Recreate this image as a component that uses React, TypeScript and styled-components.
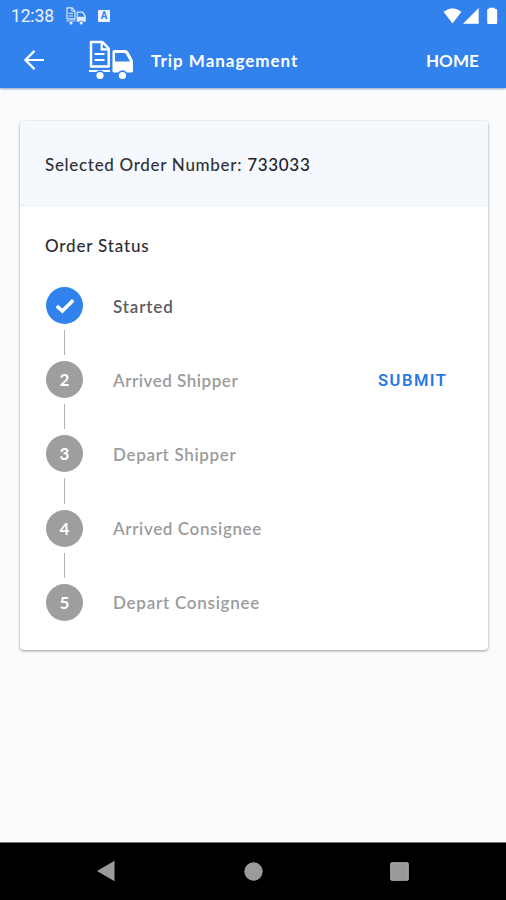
import React from "react";
import styled, { createGlobalStyle } from "styled-components";

const GlobalStyle = createGlobalStyle`
  * { box-sizing: border-box; }
  body { margin: 0; background: #f9fbfd; }
`;

const Screen = styled.div`
  width: 506px;
  height: 900px;
  display: flex;
  flex-direction: column;
  background: #f9fbfd;
  font-family: Lato, "Open Sans", sans-serif;
  overflow: hidden;
`;

const Header = styled.header`
  height: 88px;
  flex: none;
  background: #3182ed;
  color: #fff;
  box-shadow: 0 1px 2px rgba(40, 70, 130, 0.5);
`;

const StatusBar = styled.div`
  height: 32px;
  display: flex;
  align-items: center;
  padding: 0 8px 0 11px;
`;

const Clock = styled.span`
  width: 55px;
  font: 400 17.5px/32px Roboto, sans-serif;
  letter-spacing: -0.15px;
  opacity: 0.9;
`;

const Badge = styled.span`
  width: 12px;
  height: 12px;
  margin-left: 12px;
  border-radius: 1px;
  background: #eef4fd;
  color: #3182ed;
  font: 700 10px/12px Roboto, sans-serif;
  text-align: center;
`;

const SignalIcons = styled.svg`
  margin-left: auto;
`;

const AppBar = styled.div`
  height: 56px;
  display: flex;
  align-items: center;
  padding: 0 27px 0 23px;
`;

const BackIcon = styled.svg`
  margin-right: 44px;
`;

const Title = styled.h1`
  margin: 0 auto 0 18px;
  font-size: 17px;
  font-weight: 700;
  letter-spacing: 0.98px;
  white-space: nowrap;
`;

const HomeLink = styled.button`
  padding: 0;
  border: 0;
  background: none;
  color: #fff;
  font: 700 17px Lato, sans-serif;
  letter-spacing: 0.1px;
`;

const Main = styled.main`
  flex: 1;
  padding: 33px 18.5px 0 20px;
`;

const Card = styled.section`
  height: 529px;
  border-radius: 4px;
  background: #fff;
  box-shadow: 0 1px 3px rgba(0, 0, 0, 0.38), 0 0 1px rgba(0, 0, 0, 0.12);
  overflow: hidden;
`;

const CardHeader = styled.div`
  height: 85px;
  padding: 3px 0 0 25px;
  display: flex;
  align-items: center;
  background: #f5f9fe;
  border-bottom: 1px solid #e9eef4;
  color: #303236;
  font-size: 17px;
  font-weight: 500;
  letter-spacing: 0.69px;
  white-space: pre;
`;

const OrderNumber = styled.span`
  color: #202226;
`;

const SectionTitle = styled.h2`
  margin: 0;
  padding: 27px 0 0 25px;
  font-size: 17px;
  line-height: 26px;
  font-weight: 500;
  letter-spacing: 0.83px;
  color: #2e2e2e;
`;

const Steps = styled.ol`
  margin: 0;
  padding: 28px 40px 0 26px;
  list-style: none;
`;

const Step = styled.li`
  height: 37px;
  display: flex;
  align-items: center;
`;

const Connector = styled.li`
  width: 1.5px;
  height: 25.2px;
  margin: 6px 0 6px 17.5px;
  background: #b3b3b3;
`;

const Marker = styled.span<{ $done?: boolean }>`
  width: 37px;
  height: 37px;
  flex: none;
  border-radius: 50%;
  display: flex;
  align-items: center;
  justify-content: center;
  background: ${(p) => (p.$done ? "#3182ed" : "#9e9e9e")};
  color: #fff;
  font-size: 17px;
  font-weight: 700;
`;

const StepLabel = styled.span<{ $done?: boolean; $spacing: number }>`
  margin: 1px 0 0 30px;
  font-size: 17px;
  font-weight: 600;
  letter-spacing: ${(p) => p.$spacing}px;
  color: ${(p) => (p.$done ? "#5c5c5c" : "#9c9c9c")};
`;

const SubmitButton = styled.button`
  margin: 2px 0 0 auto;
  padding: 0;
  border: 0;
  background: none;
  color: #2878e4;
  font: 600 16.5px Roboto, sans-serif;
  letter-spacing: 1.5px;
`;

const NavBar = styled.nav`
  height: 58px;
  flex: none;
  border-top: 1px solid #777;
  background: #000;
  display: flex;
  align-items: center;
  justify-content: space-between;
  padding: 0 97px 1px 96px;
`;

const HomeKey = styled.svg`
  margin-left: 2px;
`;

function TruckIcon({ width, height, faded }: { width: number; height: number; faded?: boolean }) {
  return (
    <svg width={width} height={height} viewBox="0 0 44 40" fill="none" stroke="#fff" opacity={faded ? 0.85 : 1}>
      <path d="M2 2H13.5L19.7 8.5V26.5H2Z" strokeWidth="2.5" strokeLinejoin="round" />
      <path d="M12.7 2V9.3H19.5" strokeWidth="2.2" />
      <path d="M5.5 14H15.5M5.5 20H15.5" strokeWidth="2.2" />
      <path d="M0 31H21" strokeWidth="2" />
      <path
        d="M25 10H36.5Q38 10 39 11.5L43 18.5Q44 20 44 22V31Q44 32.5 42.5 32.5H25Q23.5 32.5 23.5 31V11.5Q23.5 10 25 10ZM26 13V21.5H41L37 14Q36.5 13 35.5 13Z"
        fill="#fff"
        fillRule="evenodd"
        stroke="none"
      />
      <circle cx="11" cy="35.5" r="4.4" fill="#fff" stroke="#3182ed" strokeWidth="1.6" />
      <circle cx="33.5" cy="35.5" r="4.4" fill="#fff" stroke="#3182ed" strokeWidth="1.6" />
    </svg>
  );
}

const steps = [
  { label: "Started", spacing: 0.85, done: true },
  { label: "Arrived Shipper", spacing: 0.53 },
  { label: "Depart Shipper", spacing: 0.67 },
  { label: "Arrived Consignee", spacing: 0.62 },
  { label: "Depart Consignee", spacing: 0.74 },
].map((step, i) => ({ ...step, action: i === 1 ? "SUBMIT" : undefined }));

export default function App() {
  return (
    <Screen>
      <GlobalStyle />
      <Header>
        <StatusBar>
          <Clock>12:38</Clock>
          <TruckIcon width={20} height={18} faded />
          <Badge>A</Badge>
          <SignalIcons width="56" height="18" viewBox="442 6 56 18" fill="#fff">
            <path d="M443.5 10.7Q452.5 3.6 461.5 10.7L452.5 22.5Z" />
            <path d="M463 22.8L478.7 7V22.8Z" />
            <path d="M488.8 8V6.8H494.8V8H496Q497.2 8 497.2 9.3V21.7Q497.2 23 496 23H488.4Q487.2 23 487.2 21.7V9.3Q487.2 8 488.4 8Z" />
          </SignalIcons>
        </StatusBar>
        <AppBar>
          <BackIcon width="22" height="20" viewBox="0 0 22 20" fill="none" stroke="#fff" strokeWidth="2.2">
            <path d="M21 10H2.5M11.5 0.9L2.4 10L11.5 19.1" />
          </BackIcon>
          <TruckIcon width={44} height={40} />
          <Title>Trip Management</Title>
          <HomeLink>HOME</HomeLink>
        </AppBar>
      </Header>
      <Main>
        <Card>
          <CardHeader>
            Selected Order Number: <OrderNumber>733033</OrderNumber>
          </CardHeader>
          <SectionTitle>Order Status</SectionTitle>
          <Steps>
            {steps.map((step, i) => (
              <React.Fragment key={step.label}>
                {i > 0 && <Connector />}
                <Step>
                  <Marker $done={step.done}>
                    {step.done ? (
                      <svg width="20" height="16" viewBox="0 0 20 16" fill="none" stroke="#fff" strokeWidth="3.6">
                        <path d="M1.8 8L7.4 13L18.2 2.3" />
                      </svg>
                    ) : (
                      i + 1
                    )}
                  </Marker>
                  <StepLabel $done={step.done} $spacing={step.spacing}>
                    {step.label}
                  </StepLabel>
                  {step.action && <SubmitButton>{step.action}</SubmitButton>}
                </Step>
              </React.Fragment>
            ))}
          </Steps>
        </Card>
      </Main>
      <NavBar>
        <svg width="19" height="22" viewBox="0 0 19 22">
          <path d="M1 11L18.5 0.8V21.2Z" fill="#9b9b9b" />
        </svg>
        <HomeKey width="19" height="19" viewBox="0 0 19 19">
          <circle cx="9.5" cy="9.5" r="9.2" fill="#9b9b9b" />
        </HomeKey>
        <svg width="19" height="19" viewBox="0 0 19 19">
          <rect x="0.7" y="0.7" width="17.6" height="17.6" rx="1" fill="#999" stroke="#adadad" />
        </svg>
      </NavBar>
    </Screen>
  );
}
